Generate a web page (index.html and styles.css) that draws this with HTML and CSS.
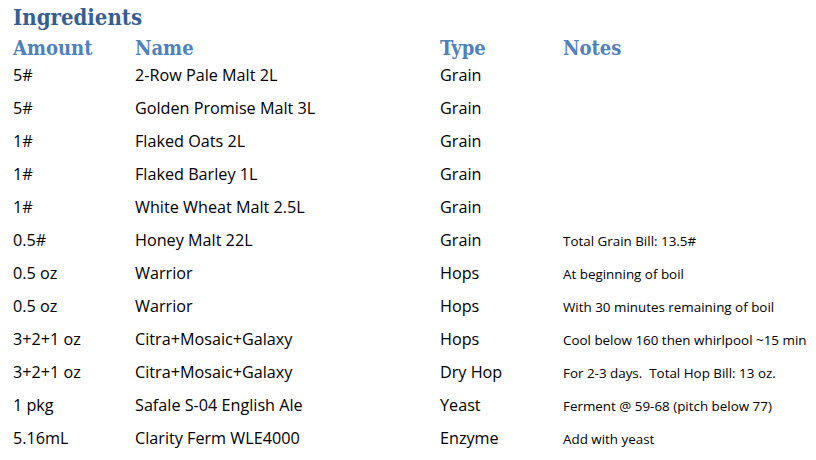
FILE: index.html
```html
<!DOCTYPE html>
<html>
<head>
<meta charset="utf-8">
<link rel="stylesheet" href="styles.css">
</head>
<body>
<div class="page">
  <h1 class="title">Ingredients</h1>
  <div class="row head">
    <div class="c amt">Amount</div>
    <div class="c name">Name</div>
    <div class="c type">Type</div>
    <div class="c notes">Notes</div>
  </div>
  <div class="row"><div class="c amt">5#</div><div class="c name">2-Row Pale Malt 2L</div><div class="c type">Grain</div><div class="c notes"></div></div>
  <div class="row"><div class="c amt">5#</div><div class="c name">Golden Promise Malt 3L</div><div class="c type">Grain</div><div class="c notes"></div></div>
  <div class="row"><div class="c amt">1#</div><div class="c name">Flaked Oats 2L</div><div class="c type">Grain</div><div class="c notes"></div></div>
  <div class="row"><div class="c amt">1#</div><div class="c name">Flaked Barley 1L</div><div class="c type">Grain</div><div class="c notes"></div></div>
  <div class="row"><div class="c amt">1#</div><div class="c name">White Wheat Malt 2.5L</div><div class="c type">Grain</div><div class="c notes"></div></div>
  <div class="row"><div class="c amt">0.5#</div><div class="c name">Honey Malt 22L</div><div class="c type">Grain</div><div class="c notes">Total Grain Bill: 13.5#</div></div>
  <div class="row"><div class="c amt">0.5 oz</div><div class="c name">Warrior</div><div class="c type">Hops</div><div class="c notes">At beginning of boil</div></div>
  <div class="row"><div class="c amt">0.5 oz</div><div class="c name">Warrior</div><div class="c type">Hops</div><div class="c notes">With 30 minutes remaining of boil</div></div>
  <div class="row"><div class="c amt">3+2+1 oz</div><div class="c name">Citra+Mosaic+Galaxy</div><div class="c type">Hops</div><div class="c notes">Cool below 160 then whirlpool ~15 min</div></div>
  <div class="row"><div class="c amt">3+2+1 oz</div><div class="c name">Citra+Mosaic+Galaxy</div><div class="c type">Dry Hop</div><div class="c notes">For 2-3 days.&nbsp; Total Hop Bill: 13 oz.</div></div>
  <div class="row"><div class="c amt">1 pkg</div><div class="c name">Safale S-04 English Ale</div><div class="c type">Yeast</div><div class="c notes">Ferment @ 59-68 (pitch below 77)</div></div>
  <div class="row"><div class="c amt">5.16mL</div><div class="c name">Clarity Ferm WLE4000</div><div class="c type">Enzyme</div><div class="c notes">Add with yeast</div></div>
</div>
</body>
</html>
```
FILE: styles.css
```css
html, body {
  margin: 0;
  padding: 0;
  background: #ffffff;
}
.page {
  padding: 0 0 0 13px;
  font-family: "Open Sans", "Lato", sans-serif;
  color: #000000;
}
.title {
  margin: 0;
  padding-top: 2px;
  font-family: "DejaVu Serif Condensed", "DejaVu Serif", serif;
  font-stretch: condensed;
  font-weight: bold;
  font-size: 22px;
  line-height: 30px;
  color: #365f91;
}
.row {
  display: grid;
  grid-template-columns: 122px 305px 123px 1fr;
  align-items: baseline;
  height: 33px;
  font-size: 16.2px;
  line-height: 33px;
  white-space: nowrap;
}
.row.head {
  margin-top: 5px;
  height: 22px;
  line-height: 23px;
  font-family: "DejaVu Serif Condensed", "DejaVu Serif", serif;
  font-stretch: condensed;
  font-weight: bold;
  font-size: 20px;
  color: #4f81bd;
}
.row .notes {
  font-size: 13.4px;
}
.row.head .notes {
  font-size: 20px;
}
```
